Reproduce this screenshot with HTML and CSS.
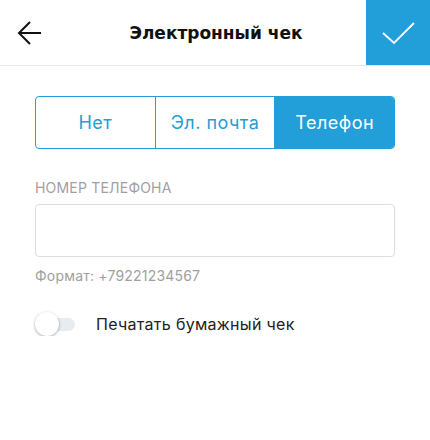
FILE: index.html
```html
<!DOCTYPE html>
<html>
  <head>
    <meta charset="UTF-8" />
    <title>Электронный чек</title>
    <link rel="stylesheet" href="styles.css">
  </head>
  <body>
    <div class="header">
      <button class="back">
        <svg width="28" height="28" viewBox="0 0 28 28">
          <path d="M26 14H4M15 3L4 14l11 11" fill="none" stroke="#111" stroke-width="2"/>
        </svg>
      </button>
      <div class="title">Электронный чек</div>
      <button class="done">
        <svg width="36" height="24" viewBox="0 0 36 24">
          <path d="M2 12l11 10L33 2" fill="none" stroke="#fff" stroke-width="1.8"/>
        </svg>
      </button>
    </div>

    <div class="content">
      <div class="segments">
        <div class="segment">Нет</div>
        <div class="segment">Эл. почта</div>
        <div class="segment active">Телефон</div>
      </div>

      <div class="field-label">НОМЕР ТЕЛЕФОНА</div>
      <input type="text" class="field" />
      <div class="hint">Формат: +79221234567</div>

      <div class="switch-row">
        <div class="switch">
          <div class="knob"></div>
        </div>
        <span>Печатать бумажный чек</span>
      </div>
    </div>
  </body>
</html>
```

FILE: styles.css
```css
body {
  margin: 0;
  font-family: Inter, "Noto Sans", sans-serif;
  background-color: white;
  color: #222;
}

.header {
  display: flex;
  align-items: center;
  height: 65px;
  border-bottom: 1px solid #e6e6e6;
}

.back {
  width: 60px;
  height: 65px;
  padding: 0 0 0 15px;
  border: none;
  background: none;
  display: flex;
  align-items: center;
}

.title {
  flex: 1;
  text-align: center;
  font-family: "DejaVu Sans", sans-serif;
  font-weight: bold;
  font-size: 17px;
  color: #111;
  padding-left: 6px;
}

.done {
  width: 64px;
  height: 65px;
  border: none;
  background-color: #229ed9;
  display: flex;
  align-items: center;
  justify-content: center;
  padding: 0 0 0 2px;
}

.content {
  padding: 30px 35px 0 35px;
}

.segments {
  display: flex;
  border: 1px solid #229ed9;
  border-radius: 4px;
  height: 51px;
  overflow: hidden;
}

.segment {
  flex: 1;
  display: flex;
  align-items: center;
  justify-content: center;
  font-size: 18px;
  letter-spacing: 0.5px;
  color: #229ed9;
  border-left: 1px solid #229ed9;
}

.segment:first-child {
  border-left: none;
}

.segment.active {
  background-color: #229ed9;
  color: white;
}

.field-label {
  margin-top: 30px;
  font-size: 14px;
  color: #a0a0a0;
  letter-spacing: 0.2px;
}

.field {
  display: block;
  width: 100%;
  height: 53px;
  margin-top: 8px;
  border: 1px solid #dedede;
  border-radius: 4px;
  box-sizing: border-box;
}

.hint {
  margin-top: 10px;
  font-size: 14px;
  color: #a0a0a0;
  letter-spacing: 0.2px;
}

.switch-row {
  display: flex;
  align-items: center;
  margin-top: 28px;
  font-size: 16px;
  letter-spacing: 0.3px;
  color: #222;
}

.switch {
  position: relative;
  width: 40px;
  height: 24px;
  margin-right: 21px;
}

.switch::before {
  content: "";
  position: absolute;
  left: 12px;
  top: 6px;
  width: 28px;
  height: 13px;
  border-radius: 7px;
  background-color: #e6ecef;
}

.knob {
  position: absolute;
  left: 0;
  top: 0;
  width: 24px;
  height: 24px;
  border-radius: 50%;
  background-color: white;
  box-shadow: 0 1px 3px rgba(0, 0, 0, 0.35);
}
```
